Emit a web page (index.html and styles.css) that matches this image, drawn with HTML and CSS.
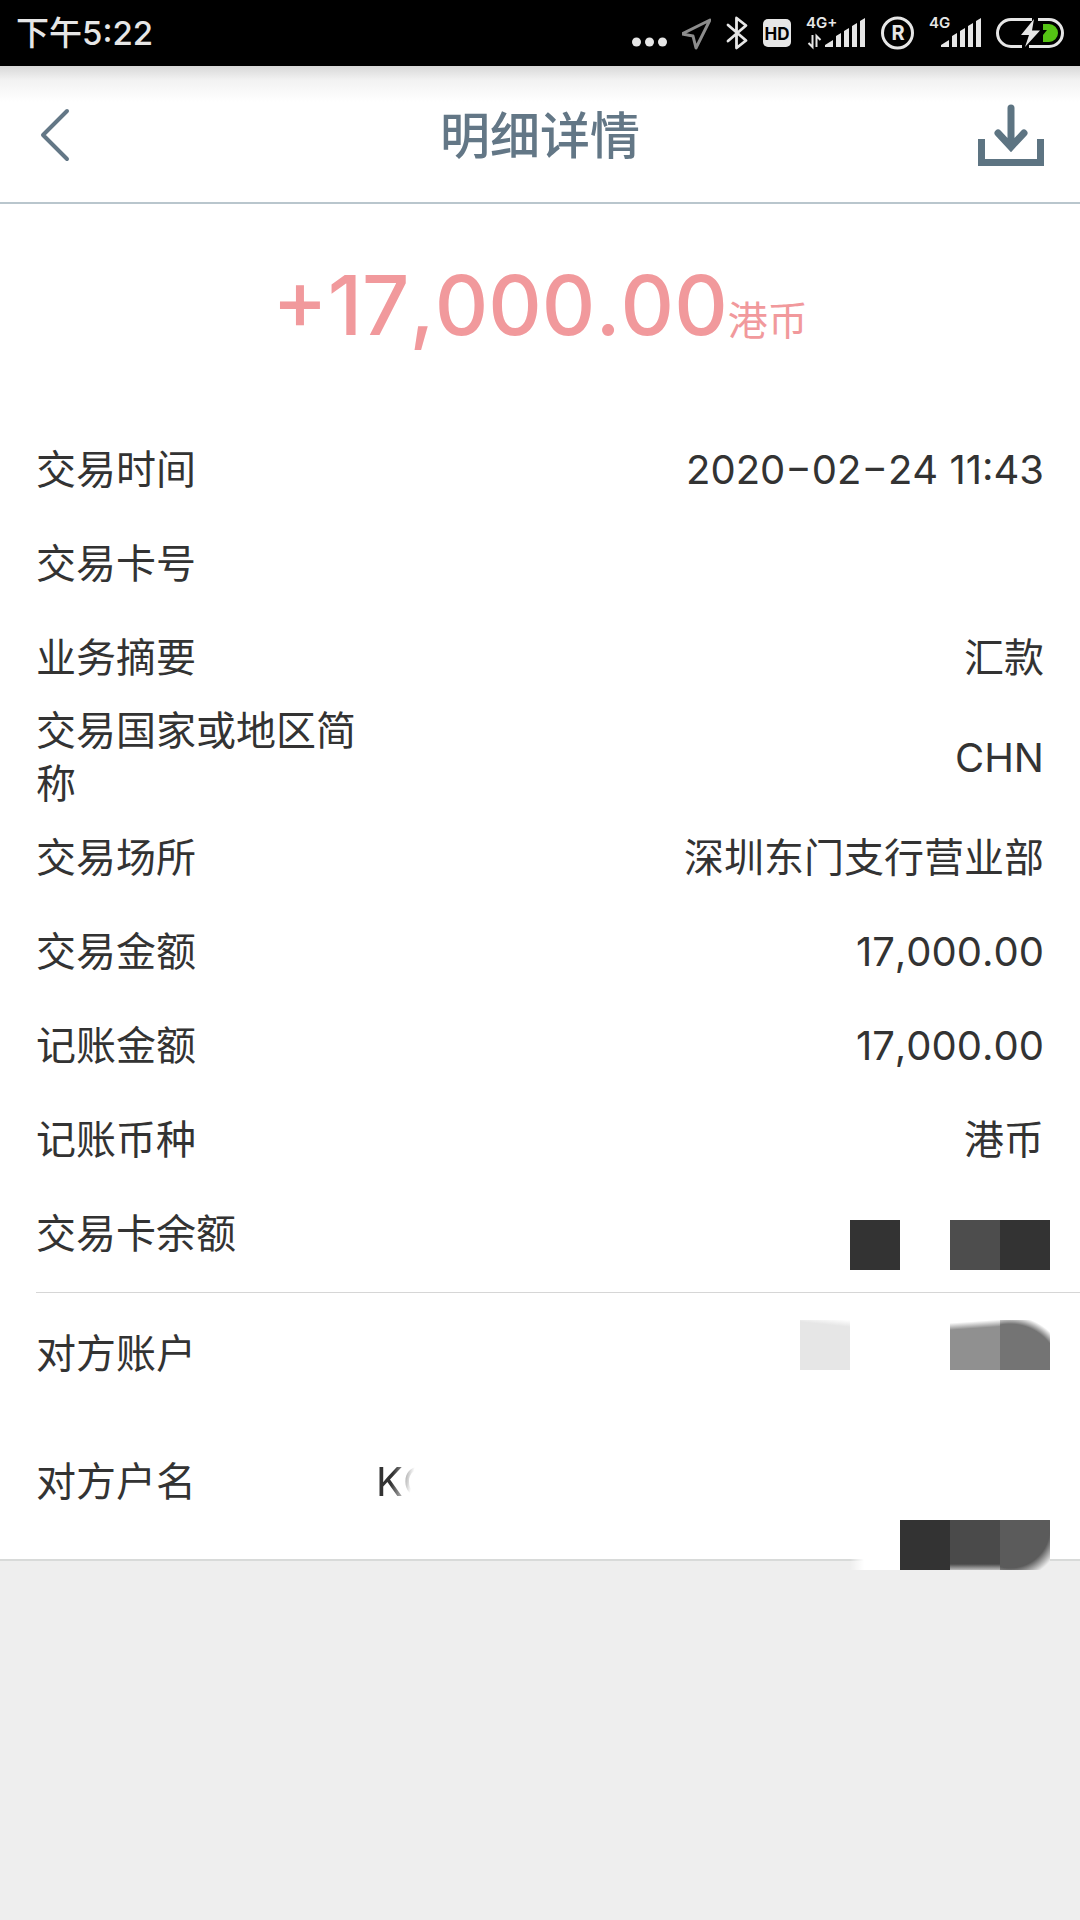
FILE: index.html
```html
<!DOCTYPE html>
<html lang="zh-CN">
  <head>
    <meta charset="utf-8">
    <meta name="viewport" content="width=device-width, initial-scale=1">
    <title>明细详情</title>
    <link rel="stylesheet" href="styles.css">
  </head>
  <body>
    <div class="status-bar">
      <span class="status-time">下午5:22</span>
      <div class="status-icons">
        <svg width="35" height="34" viewBox="0 0 35 34" fill="#e6e6e6">
          <circle cx="4.5" cy="26" r="4.5"/>
          <circle cx="17.5" cy="26" r="4.5"/>
          <circle cx="30.5" cy="26" r="4.5"/>
        </svg>
        <svg width="29" height="34" viewBox="0 0 29 34" fill="none" stroke="#8c8c8c" stroke-width="3" stroke-linejoin="round">
          <path d="M28 4 L0 18 L11 20 L14 32 Z"/>
        </svg>
        <svg width="22" height="34" viewBox="0 0 22 34" fill="none" stroke="#e6e6e6" stroke-width="2.8" stroke-linecap="round" stroke-linejoin="round">
          <path d="M2 9 L20 24.500 L10.500 32 V2 L20 9.500 L2 25"/>
        </svg>
        <svg width="28" height="34" viewBox="0 0 28 34">
          <rect y="3" width="28" height="28" rx="5" fill="#e6e6e6"/>
          <text class="icon-hd" x="14" y="24" text-anchor="middle">HD</text>
        </svg>
        <svg width="60" height="50" viewBox="0 -8 60 50" fill="#e6e6e6">
          <text class="icon-net" x="0" y="12">4G+</text>
          <path d="M6.500 19v12l-4-4M10.500 31V20l4 4" fill="none" stroke="#e6e6e6" stroke-width="2"/>
          <path d="M19 31v-2l8-5v7zM30 31V20l5-3v14zM38 31V15l5-3v19zM46 31V10l5-3v24zM54 31V5l5-3v29z"/>
        </svg>
        <svg width="33" height="34" viewBox="0 0 33 34">
          <circle cx="16.5" cy="17" r="15" fill="none" stroke="#e6e6e6" stroke-width="3"/>
          <text class="icon-r" x="17" y="24" text-anchor="middle">R</text>
        </svg>
        <svg width="52" height="50" viewBox="0 -8 52 50" fill="#e6e6e6">
          <text class="icon-net" x="0" y="12">4G</text>
          <path d="M12 31v-2l8-5v7zM23 31V20l5-3v14zM31 31V15l5-3v19zM39 31V10l5-3v24zM47 31V5l5-3v29z"/>
        </svg>
        <svg width="68" height="34" viewBox="0 0 68 34">
          <path d="M36 3.500H15a13.500 13.500 0 0 0 0 27h11M42 3.500h11a13.500 13.500 0 0 1 0 27H33" fill="none" stroke="#e6e6e6" stroke-width="3"/>
          <path d="M47 8h6a9 9 0 0 1 0 18h-6v-7l4-5h-4z" fill="#55c314"/>
          <path d="M38 3 L25 19 h8 L29 31 L44 14.500 h-8 Z" fill="#e6e6e6"/>
        </svg>
      </div>
    </div>

    <header class="header">
      <button class="icon-button" aria-label="返回">
        <svg width="40" height="64" viewBox="0 0 40 64" fill="none" stroke="#637786" stroke-width="4" stroke-linecap="round" stroke-linejoin="round">
          <path d="M31 7 L7 31 L31 55"/>
        </svg>
      </button>
      <h1 class="title">明细详情</h1>
      <button class="icon-button" aria-label="下载">
        <svg width="66" height="64" viewBox="0 0 66 64" fill="none" stroke="#5d7482" stroke-width="7" stroke-linecap="round">
          <path d="M33 4V42M20 29l13 14 13-14"/>
          <path d="M3.500 35V58.500H62.500V35" stroke-linecap="butt"/>
        </svg>
      </button>
    </header>

    <main class="detail">
      <p class="amount">+17,000.00<span class="currency">港币</span></p>

      <dl class="group">
        <div class="row"><dt>交易时间</dt><dd>2020−02−24 11:43</dd></div>
        <div class="row"><dt>交易卡号</dt><dd></dd></div>
        <div class="row"><dt>业务摘要</dt><dd>汇款</dd></div>
        <div class="row"><dt>交易国家或地区简称</dt><dd>CHN</dd></div>
        <div class="row"><dt>交易场所</dt><dd>深圳东门支行营业部</dd></div>
        <div class="row"><dt>交易金额</dt><dd>17,000.00</dd></div>
        <div class="row"><dt>记账金额</dt><dd>17,000.00</dd></div>
        <div class="row"><dt>记账币种</dt><dd>港币</dd></div>
        <div class="row">
          <dt>交易卡余额</dt>
          <dd></dd>
          <div class="mosaic mosaic-balance">
            <span class="tile tile-black"></span>
            <span class="tile"></span>
            <span class="tile tile-dark"></span>
            <span class="tile tile-black"></span>
          </div>
        </div>
      </dl>

      <dl class="group">
        <div class="row row-account">
          <dt>对方账户</dt>
          <dd></dd>
          <div class="mosaic mosaic-account">
            <span class="tile tile-light"></span>
            <span class="tile"></span>
            <span class="tile"></span>
            <span class="tile tile-gray"></span>
            <span class="tile tile-mid"></span>
          </div>
        </div>
        <div class="row row-name">
          <dt>对方户名</dt>
          <dd><span class="masked">KO</span></dd>
          <div class="mosaic mosaic-name">
            <span class="tile tile-smear"></span>
            <span class="tile tile-black"></span>
            <span class="tile tile-fade"></span>
            <span class="tile tile-dim"></span>
          </div>
        </div>
      </dl>
    </main>
  </body>
</html>
```

FILE: styles.css
```css
* {
    box-sizing: border-box;
}
body {
    margin: 0;
    min-height: 100vh;
    background-color: #eeeeee;
    font-family: Inter, "Noto Sans CJK SC", sans-serif;
    font-size: 40px;
    line-height: 53px;
    font-kerning: none;
    color: #333333;
}

/* phone status bar */
.status-bar {
    display: flex;
    align-items: center;
    justify-content: space-between;
    height: 66px;
    padding: 0 16px;
    background-color: black;
    color: #e6e6e6;
}
.status-time {
    font-size: 33px;
    font-weight: 500;
}
.status-icons {
    display: flex;
    align-items: center;
    gap: 15px;
}
.icon-hd {
    font-size: 17px;
    font-weight: 700;
    fill: black;
}
.icon-net {
    font-size: 15px;
    font-weight: 600;
}
.icon-r {
    font-size: 20px;
    font-weight: 700;
    fill: #e6e6e6;
}

/* title bar */
.header {
    display: grid;
    grid-template-columns: 1fr auto 1fr;
    align-items: center;
    height: 138px;
    padding: 4px 36px 0;
    border-bottom: 2px solid #b9c6cd;
    background: linear-gradient(#d8d8d8, #f2f2f2 14px, white 36px);
}
.title {
    margin: 0;
    font-size: 50px;
    font-weight: 500;
    color: #637786;
}
.icon-button {
    display: flex;
    padding: 0;
    border: none;
    background: none;
    cursor: pointer;
}
.icon-button:last-child {
    justify-self: end;
}

/* transaction */
.detail {
    background-color: white;
    border-bottom: 2px solid #d8dad9;
}
.amount {
    margin: 0;
    padding: 51px 0;
    font-size: 83px;
    font-weight: 500;
    line-height: 100px;
    text-align: center;
    color: #f1999c;
}
.currency {
    font-size: 40px;
    font-weight: 400;
}
.group {
    margin: 0;
    padding-bottom: 12px;
}
.group + .group {
    margin-left: 36px;
    padding-bottom: 10px;
    border-top: 1px solid #d6d6d6;
}
.group + .group .row {
    padding-left: 0;
}
.row {
    position: relative;
    display: grid;
    grid-template-columns: 330px 1fr;
    column-gap: 10px;
    align-items: center;
    min-height: 94px;
    padding: 0 36px;
}
.row dd {
    margin: 0;
    text-align: right;
}
.row-account {
    min-height: 120px;
}
.row-name {
    min-height: 136px;
}
.row-name dd {
    text-align: left;
}
.masked {
    -webkit-mask-image: linear-gradient(100deg, black 30%, transparent 62%);
    mask-image: linear-gradient(100deg, black 30%, transparent 62%);
}

/* mosaic painted over the private values */
.mosaic {
    position: absolute;
    right: 30px;
    z-index: 1;
    display: flex;
}
.mosaic-balance {
    top: 34px;
}
.mosaic-account {
    top: 27px;
}
.mosaic-name {
    top: 107px;
}
.tile {
    width: 50px;
    height: 50px;
}
.tile-black {
    background-color: #333333;
}
.tile-dark {
    background-color: #4d4d4d;
}
.tile-fade {
    background: linear-gradient(#4a4a4a 44px, #bbbbbb);
}
.tile-dim {
    background: radial-gradient(circle at 10px 8px, #5b5b5b 40px, #eeeeee 52px);
}
.tile-light {
    background: linear-gradient(186deg, white, #e6e6e6 7px);
}
.tile-gray {
    background: linear-gradient(176deg, white 3px, #909090 10px);
}
.tile-mid {
    background: radial-gradient(circle at 10px 54px, #747474 50px, white 58px);
}
.tile-smear {
    background: linear-gradient(90deg, transparent, white 14px);
}
```
